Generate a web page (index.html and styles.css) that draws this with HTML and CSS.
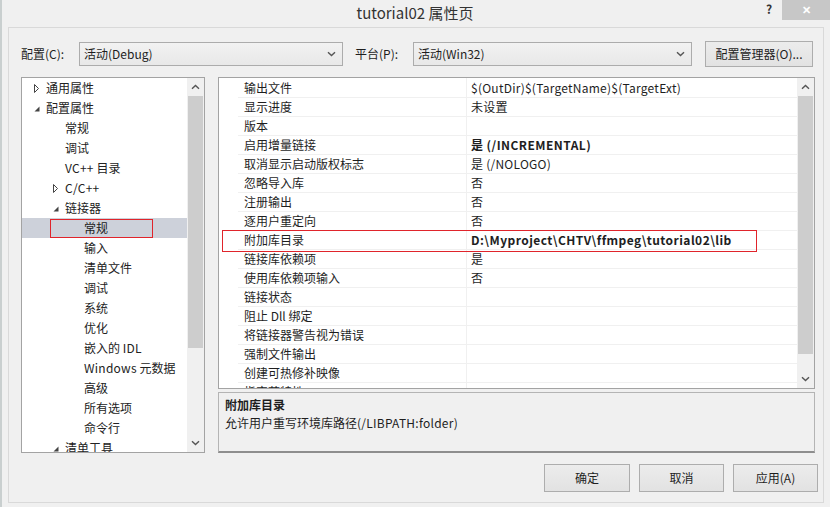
FILE: index.html
```html
<!DOCTYPE html>
<html lang="zh-CN">
<head>
    <meta charset="UTF-8">
    <title>tutorial02 属性页</title>
    <link rel="stylesheet" href="styles.css">
</head>
<body>
    <div class="titlebar">
        <span class="title">tutorial02 属性页</span>
        <span class="help">?</span>
        <span class="close">✕</span>
    </div>

    <div class="client">
        <div class="toolbar">
            <span class="label">配置(C):</span>
            <div class="combo combo-cfg">
                <span>活动(Debug)</span>
                <svg width="9" height="6" viewBox="0 0 9 6"><path d="M1 1.2 L4.5 4.6 L8 1.2" fill="none" stroke="#555" stroke-width="1.4"/></svg>
            </div>
            <span class="label label-platform">平台(P):</span>
            <div class="combo combo-platform">
                <span>活动(Win32)</span>
                <svg width="9" height="6" viewBox="0 0 9 6"><path d="M1 1.2 L4.5 4.6 L8 1.2" fill="none" stroke="#555" stroke-width="1.4"/></svg>
            </div>
            <button class="btn btn-manager">配置管理器(O)...</button>
        </div>

        <div class="main">
            <div class="tree">
                <div class="tree-list">
                    <div class="node lv1"><span class="tw"><svg width="8" height="9" viewBox="0 0 8 9"><path d="M1.5 0.5 L5.5 4.5 L1.5 8.5 Z" fill="none" stroke="#444"/></svg></span>通用属性</div>
                    <div class="node lv1"><span class="tw"><svg width="8" height="9" viewBox="0 0 8 9"><path d="M6.5 2.5 V7.5 H1.5 Z" fill="#444"/></svg></span>配置属性</div>
                    <div class="node lv2"><span class="tw"></span>常规</div>
                    <div class="node lv2"><span class="tw"></span>调试</div>
                    <div class="node lv2"><span class="tw"></span><span class="latin">VC++</span>&nbsp;目录</div>
                    <div class="node lv2"><span class="tw"><svg width="8" height="9" viewBox="0 0 8 9"><path d="M1.5 0.5 L5.5 4.5 L1.5 8.5 Z" fill="none" stroke="#444"/></svg></span><span class="latin">C/C++</span></div>
                    <div class="node lv2"><span class="tw"><svg width="8" height="9" viewBox="0 0 8 9"><path d="M6.5 2.5 V7.5 H1.5 Z" fill="#444"/></svg></span>链接器</div>
                    <div class="node lv3 selected"><span class="tw"></span>常规<span class="mark mark-tree"></span></div>
                    <div class="node lv3"><span class="tw"></span>输入</div>
                    <div class="node lv3"><span class="tw"></span>清单文件</div>
                    <div class="node lv3"><span class="tw"></span>调试</div>
                    <div class="node lv3"><span class="tw"></span>系统</div>
                    <div class="node lv3"><span class="tw"></span>优化</div>
                    <div class="node lv3"><span class="tw"></span>嵌入的&nbsp;<span class="latin">IDL</span></div>
                    <div class="node lv3"><span class="tw"></span><span class="latin">Windows</span>&nbsp;元数据</div>
                    <div class="node lv3"><span class="tw"></span>高级</div>
                    <div class="node lv3"><span class="tw"></span>所有选项</div>
                    <div class="node lv3"><span class="tw"></span>命令行</div>
                    <div class="node lv2"><span class="tw"><svg width="8" height="9" viewBox="0 0 8 9"><path d="M6.5 2.5 V7.5 H1.5 Z" fill="#444"/></svg></span>清单工具</div>
                </div>
                <div class="vscroll">
                    <div class="arrow"><svg width="9" height="6" viewBox="0 0 9 6"><path d="M1 4.8 L4.5 1.4 L8 4.8" fill="none" stroke="#555" stroke-width="1.4"/></svg></div>
                    <div class="thumb thumb-tree"></div>
                    <div class="track"></div>
                    <div class="arrow"><svg width="9" height="6" viewBox="0 0 9 6"><path d="M1 1.2 L4.5 4.6 L8 1.2" fill="none" stroke="#555" stroke-width="1.4"/></svg></div>
                </div>
            </div>

            <div class="right">
                <div class="grid">
                    <div class="rows">
                        <div class="prop"><span class="gutter"></span><span class="name">输出文件</span><span class="value">$(OutDir)$(TargetName)$(TargetExt)</span></div>
                        <div class="prop"><span class="gutter"></span><span class="name">显示进度</span><span class="value">未设置</span></div>
                        <div class="prop"><span class="gutter"></span><span class="name">版本</span><span class="value"></span></div>
                        <div class="prop"><span class="gutter"></span><span class="name">启用增量链接</span><span class="value bold">是 (/INCREMENTAL)</span></div>
                        <div class="prop"><span class="gutter"></span><span class="name">取消显示启动版权标志</span><span class="value">是 (/NOLOGO)</span></div>
                        <div class="prop"><span class="gutter"></span><span class="name">忽略导入库</span><span class="value">否</span></div>
                        <div class="prop"><span class="gutter"></span><span class="name">注册输出</span><span class="value">否</span></div>
                        <div class="prop"><span class="gutter"></span><span class="name">逐用户重定向</span><span class="value">否</span></div>
                        <div class="prop"><span class="gutter"></span><span class="name">附加库目录</span><span class="value bold">D:\Myproject\CHTV\ffmpeg\tutorial02\lib</span></div>
                        <div class="prop"><span class="gutter"></span><span class="name">链接库依赖项</span><span class="value">是</span></div>
                        <div class="prop"><span class="gutter"></span><span class="name">使用库依赖项输入</span><span class="value">否</span></div>
                        <div class="prop"><span class="gutter"></span><span class="name">链接状态</span><span class="value"></span></div>
                        <div class="prop"><span class="gutter"></span><span class="name">阻止 Dll 绑定</span><span class="value"></span></div>
                        <div class="prop"><span class="gutter"></span><span class="name">将链接器警告视为错误</span><span class="value"></span></div>
                        <div class="prop"><span class="gutter"></span><span class="name">强制文件输出</span><span class="value"></span></div>
                        <div class="prop"><span class="gutter"></span><span class="name">创建可热修补映像</span><span class="value"></span></div>
                        <div class="prop"><span class="gutter"></span><span class="name">指定节特性</span><span class="value"></span></div>
                        <span class="mark mark-grid"></span>
                    </div>
                    <div class="vscroll">
                        <div class="arrow"><svg width="9" height="6" viewBox="0 0 9 6"><path d="M1 4.8 L4.5 1.4 L8 4.8" fill="none" stroke="#555" stroke-width="1.4"/></svg></div>
                        <div class="thumb thumb-grid"></div>
                        <div class="track"></div>
                        <div class="arrow"><svg width="9" height="6" viewBox="0 0 9 6"><path d="M1 1.2 L4.5 4.6 L8 1.2" fill="none" stroke="#555" stroke-width="1.4"/></svg></div>
                    </div>
                </div>
                <div class="desc">
                    <div class="desc-title">附加库目录</div>
                    <div class="desc-text">允许用户重写环境库路径<span class="latin">(/LIBPATH:folder)</span></div>
                </div>
            </div>
        </div>

        <div class="buttons">
            <button class="btn btn-ok">确定</button>
            <button class="btn">取消</button>
            <button class="btn">应用(A)</button>
        </div>
    </div>
</body>
</html>
```

FILE: styles.css
```css
* {
    box-sizing: border-box;
}
body {
    margin: 0;
    width: 830px;
    height: 507px;
    overflow: hidden;
    background-color: #f0f0f0;
    border-left: 2px solid #c9cfcf;
    font-family: "Noto Sans CJK SC", sans-serif;
    font-size: 12px;
    color: #1e1e1e;
}
.latin {
    letter-spacing: 0.25px;
}

/* caption */
.titlebar {
    display: flex;
    align-items: flex-start;
    height: 27px;
    padding-left: 66px;
}
.title {
    flex: 1;
    text-align: center;
    font-size: 15px;
    line-height: 25px;
    color: #333;
}
.help {
    width: 14px;
    margin-right: 6px;
    text-align: center;
    font-weight: bold;
    line-height: 18px;
    color: #333;
}
.close {
    width: 48px;
    height: 20px;
    background-color: #c7c7c7;
    color: #fff;
    text-align: center;
    font-size: 11px;
    font-weight: bold;
    line-height: 19px;
}

/* dialog body */
.client {
    margin-left: 6px;
    width: 816px;
    height: 476px;
    border: 1px solid #d9d9d9;
    padding: 13px 0 0 12px;
}
.toolbar {
    display: flex;
    align-items: center;
    height: 26px;
}
.label {
    width: 58px;
    line-height: 16px;
}
.label-platform {
    margin-left: 12px;
}
.combo {
    height: 24px;
    display: flex;
    align-items: center;
    justify-content: space-between;
    padding: 0 6px 0 4px;
    border: 1px solid #acacac;
    background: linear-gradient(#f2f2f2, #e8e8e8);
    line-height: 16px;
}
.combo-cfg {
    width: 264px;
}
.combo-platform {
    width: 279px;
}
.btn {
    height: 28px;
    width: 85px;
    padding: 0;
    border: 1px solid #adadad;
    background: linear-gradient(#ececec, #e2e2e2);
    font-family: inherit;
    font-size: 12px;
    color: #1e1e1e;
    line-height: 16px;
}
.btn-manager {
    width: 108px;
    height: 26px;
    margin-left: 13px;
}
.btn-ok {
    width: 86px;
}

.main {
    display: flex;
    height: 376px;
    margin-top: 10px;
}

/* tree */
.tree {
    width: 184px;
    display: flex;
    border: 1px solid #a3a3a3;
    background-color: #fff;
}
.tree-list {
    flex: 1;
    overflow: hidden;
}
.node {
    position: relative;
    height: 20px;
    display: flex;
    align-items: center;
    line-height: 20px;
    white-space: nowrap;
    color: #222;
}
.tw {
    width: 13px;
    display: flex;
    align-items: center;
}
.lv1 {
    padding-left: 11px;
}
.lv2 {
    padding-left: 30px;
}
.lv3 {
    padding-left: 49px;
}
.selected {
    background-color: #cdd1da;
}
.mark {
    position: absolute;
    border: 1px solid #e0242b;
}
.mark-tree {
    left: 28px;
    top: 1px;
    width: 103px;
    height: 19px;
}

/* scrollbars */
.vscroll {
    width: 17px;
    display: flex;
    flex-direction: column;
    background-color: #f0f0f0;
}
.arrow {
    height: 18px;
    display: flex;
    align-items: center;
    justify-content: center;
}
.thumb {
    margin: 0 1px;
    background-color: #cdcdcd;
}
.thumb-tree {
    height: 252px;
}
.thumb-grid {
    height: 258px;
}
.track {
    flex: 1;
}

/* property grid */
.right {
    width: 597px;
    margin-left: 13px;
    display: flex;
    flex-direction: column;
}
.grid {
    height: 312px;
    display: flex;
    border: 1px solid #a3a3a3;
    background-color: #fff;
}
.rows {
    position: relative;
    flex: 1;
    overflow: hidden;
}
.prop {
    display: grid;
    grid-template-columns: 19px 229px 1fr;
    height: 19px;
    line-height: 19px;
    white-space: nowrap;
}
.name,
.value {
    border-bottom: 1px solid #f0f0f0;
}
.name {
    padding-left: 6px;
    border-right: 1px solid #f0f0f0;
}
.value {
    padding-left: 4px;
    letter-spacing: 0.25px;
}
.value.bold {
    font-weight: bold;
    letter-spacing: 0.45px;
}
.mark-grid {
    left: 3px;
    top: 152px;
    width: 535px;
    height: 22px;
}

.desc {
    flex: 1;
    margin-top: 3px;
    padding: 3px 6px;
    border: 1px solid #b4b4b4;
    border-bottom: 2px solid #8e8e8e;
    line-height: 18px;
}
.desc-title {
    font-weight: bold;
}

.buttons {
    display: flex;
    justify-content: flex-end;
    gap: 9px;
    margin-top: 11px;
    padding-right: 5px;
}
```
